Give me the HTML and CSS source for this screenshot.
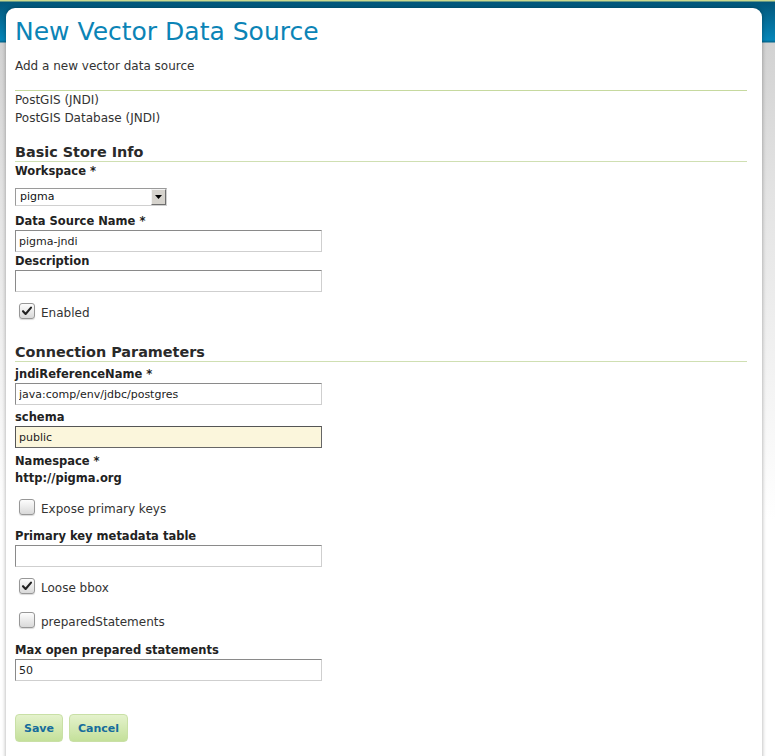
FILE: index.html
```html
<!DOCTYPE html>
<html lang="en">
<head>
<meta charset="utf-8">
<title>New Vector Data Source</title>
<link rel="stylesheet" href="styles.css">
</head>
<body>
<div class="page">
  <div class="panel">
    <h1 class="title">New Vector Data Source</h1>
    <p class="subtitle">Add a new vector data source</p>
    <div class="store-type">
      <div class="store-line">PostGIS (JNDI)</div>
      <div class="store-line">PostGIS Database (JNDI)</div>
    </div>

    <form class="form">
      <h3 class="section-title section-basic">Basic Store Info</h3>
      <label class="label mt1">Workspace *</label>
      <div class="select-wrap">
        <select class="select"><option>pigma</option></select>
        <span class="select-btn">
          <svg width="7" height="4" viewBox="0 0 7 4"><path d="M0 0h7L3.5 4z" fill="#000"/></svg>
        </span>
      </div>
      <label class="label mt7">Data Source Name *</label>
      <input class="input" type="text" value="pigma-jndi">
      <label class="label mt1">Description</label>
      <input class="input" type="text" value="">
      <div class="check-row mt11">
        <span class="checkbox checked"><svg width="14" height="14" viewBox="0 0 14 14"><path d="M3 7.2l2.6 2.8L11 3.6" fill="none" stroke="#222" stroke-width="2.1" stroke-linecap="round" stroke-linejoin="round"/></svg></span>
        <span class="check-text">Enabled</span>
      </div>

      <h3 class="section-title section-conn">Connection Parameters</h3>
      <label class="label mt4">jndiReferenceName *</label>
      <input class="input" type="text" value="java:comp/env/jdbc/postgres">
      <label class="label mt4">schema</label>
      <input class="input input-focus mt1" type="text" value="public">
      <label class="label mt5">Namespace *</label>
      <div class="label value">http://pigma.org</div>
      <div class="check-row mt12">
        <span class="checkbox"></span>
        <span class="check-text">Expose primary keys</span>
      </div>
      <label class="label mt11">Primary key metadata table</label>
      <input class="input" type="text" value="">
      <div class="check-row mt11">
        <span class="checkbox checked"><svg width="14" height="14" viewBox="0 0 14 14"><path d="M3 7.2l2.6 2.8L11 3.6" fill="none" stroke="#222" stroke-width="2.1" stroke-linecap="round" stroke-linejoin="round"/></svg></span>
        <span class="check-text">Loose bbox</span>
      </div>
      <div class="check-row mt16">
        <span class="checkbox"></span>
        <span class="check-text">preparedStatements</span>
      </div>
      <label class="label mt12">Max open prepared statements</label>
      <input class="input" type="text" value="50">

      <div class="buttons">
        <button type="button" class="btn">Save</button>
        <button type="button" class="btn">Cancel</button>
      </div>
    </form>
  </div>
</div>
</body>
</html>
```
FILE: styles.css
```css
html, body {
  margin: 0;
  padding: 0;
}

body {
  font-family: "DejaVu Sans", "Liberation Sans", sans-serif;
  font-size: 12px;
  color: #333;
  background: #fff;
}

.page {
  min-height: 756px;
  padding-top: 8px;
  box-sizing: border-box;
  background: linear-gradient(to bottom,
    #cbd98e 0, #cbd98e 1px,
    #02567a 2px, #0686b9 40px, #04668d 42px,
    #d2d2d2 43px, #e4e4e4 200px, #ffffff 520px);
}

.panel {
  margin: 0 13px 0 6px;
  padding: 9px 15px 20px 9px;
  background: #fff;
  border-radius: 9px 9px 0 0;
  box-shadow: 0 0 4px rgba(0, 0, 0, 0.35);
  min-height: 700px;
}

.title {
  margin: 0;
  font-size: 25px;
  line-height: 30px;
  font-weight: normal;
  color: #0b84b6;
}

.subtitle {
  margin: 11px 0 16px;
  line-height: 16px;
  color: #333;
}

.store-type {
  border-top: 1px solid #c6d99f;
}

.store-line {
  line-height: 18px;
  color: #333;
}

.form {
  display: flex;
  flex-direction: column;
  align-items: flex-start;
}

.section-title {
  align-self: stretch;
  margin: 0;
  font-size: 14.4px;
  line-height: 18px;
  font-weight: bold;
  color: #2a2a2a;
  border-bottom: 1px solid #cfdfb2;
}

.section-basic { margin-top: 16px; }
.section-conn { margin-top: 22px; }

.label {
  display: block;
  font-size: 11.5px;
  line-height: 17px;
  font-weight: bold;
  color: #222;
}

.value { margin-top: 0; }

.mt1 { margin-top: 1px; }
.mt2 { margin-top: 2px; }
.mt3 { margin-top: 3px; }
.mt4 { margin-top: 4px; }
.mt5 { margin-top: 5px; }
.mt7 { margin-top: 7px; }
.mt11 { margin-top: 11px; }
.mt12 { margin-top: 12px; }
.mt13 { margin-top: 13px; }
.mt15 { margin-top: 15px; }
.mt16 { margin-top: 16px; }

.select-wrap {
  position: relative;
  margin-top: 8px;
  width: 152px;
  height: 18px;
}

.select {
  -webkit-appearance: none;
  appearance: none;
  box-sizing: border-box;
  width: 152px;
  height: 18px;
  margin: 0;
  padding: 0 0 0 4px;
  border: 1px solid;
  border-color: #9a9a9a #d0d0d0 #d0d0d0 #9a9a9a;
  border-radius: 0;
  background: #fff;
  font-family: "DejaVu Sans", sans-serif;
  font-size: 11px;
  color: #111;
  line-height: 16px;
}

.select-btn {
  position: absolute;
  top: 1px;
  right: 1px;
  width: 15px;
  height: 16px;
  box-sizing: border-box;
  display: flex;
  align-items: center;
  justify-content: center;
  background: #d6d3cd;
  border: 1px solid;
  border-color: #f4f4f4 #6e6e6e #6e6e6e #f4f4f4;
}

.input {
  box-sizing: border-box;
  width: 307px;
  height: 22px;
  margin: 0;
  padding: 0 3px;
  border: 1px solid;
  border-color: #8a8a8a #cfcfcf #cfcfcf #8a8a8a;
  background: #fff;
  font-family: "DejaVu Sans", sans-serif;
  font-size: 11px;
  color: #222;
  outline: none;
}

.input-focus {
  background: #fbf6dc;
  border-color: #555 #666 #666 #555;
}

.check-row {
  display: flex;
  align-items: flex-start;
  height: 18px;
  padding-left: 4px;
}

.checkbox {
  box-sizing: border-box;
  width: 16px;
  height: 16px;
  border: 1px solid #979797;
  border-radius: 3px;
  background: linear-gradient(to bottom, #fdfdfd, #d9d9d9);
  box-shadow: 0 1px 1px rgba(0, 0, 0, 0.15);
  display: flex;
  align-items: center;
  justify-content: center;
}

.checkbox svg { display: block; }

.check-text {
  margin-left: 6px;
  padding-top: 2px;
  line-height: 16px;
  color: #333;
}

.buttons {
  display: flex;
  gap: 6px;
  margin-top: 33px;
}

.btn {
  height: 28px;
  padding: 0 8px;
  margin: 0;
  border: 1px solid #c9e0a6;
  border-radius: 4px;
  background: linear-gradient(to bottom, #e4f2cc, #c4e09a);
  font-family: "DejaVu Sans", sans-serif;
  font-size: 11px;
  font-weight: bold;
  color: #166c9c;
  cursor: pointer;
}
```
